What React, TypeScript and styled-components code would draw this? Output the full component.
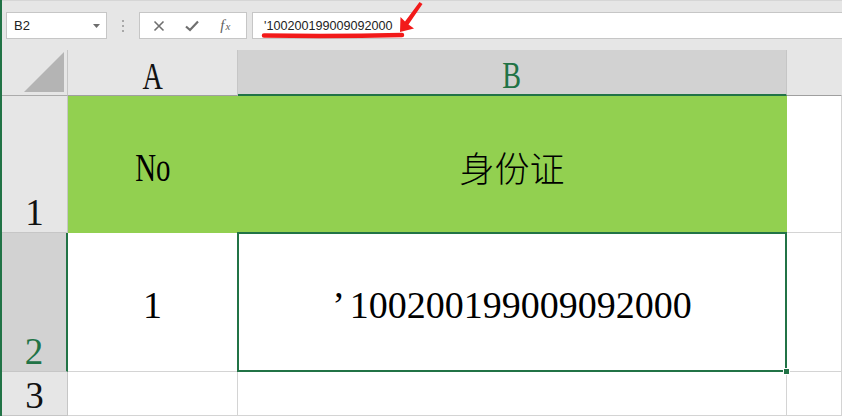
import React from "react";
import styled, { createGlobalStyle } from "styled-components";

const green = "#217346";
const fill = "#92d050";
const serif = `"Liberation Serif", "Noto Sans CJK SC", serif`;

const GlobalStyle = createGlobalStyle`
  html, body {
    margin: 0;
    padding: 0;
    background: #ffffff;
    overflow: hidden;
  }
`;

const Frame = styled.div`
  position: relative;
  height: 416px;
  display: flex;
  flex-flow: column;
  border-left: 2px solid ${green};
  overflow: hidden;
`;

const FormulaBar = styled.div`
  height: 50px;
  box-sizing: border-box;
  flex-shrink: 0;
  display: flex;
  align-items: flex-start;
  padding: 11px 0 0 4px;
  background: #e6e6e6;
  border-top: 1px solid #d6d6d6;
  font-family: "Liberation Sans", Arial, sans-serif;
`;

const Box = styled.div`
  height: 27px;
  box-sizing: border-box;
  background: #ffffff;
  border: 1px solid #c6c6c6;
  display: flex;
  align-items: center;
`;

const NameBox = styled(Box)`
  width: 101px;
  padding: 0 6px 0 7px;
  justify-content: space-between;
  font-size: 13px;
  color: #222222;
`;

const Grip = styled.div`
  width: 32px;
  height: 27px;
  display: flex;
  flex-flow: column;
  align-items: center;
  justify-content: center;
  gap: 3px;

  > span {
    width: 2px;
    height: 2px;
    background: #a8a8a8;
  }
`;

const ButtonGroup = styled(Box)`
  width: 108px;
  justify-content: space-around;
  padding: 0 4px 0 2px;
  color: #6f6f6f;
`;

const IconButton = styled.div`
  width: 24px;
  display: flex;
  justify-content: center;
  align-items: center;
`;

const FxLabel = styled.span`
  font-family: ${serif};
  font-style: italic;
  font-size: 15px;
  color: #5f5f5f;

  > small {
    font-size: 11px;
    margin-left: 1px;
  }
`;

const FormulaInput = styled(Box)`
  flex: 1;
  margin-left: 5px;
  padding-left: 11px;
  border-right: none;
  font-size: 12.6px;
  color: #222222;
`;

const Annotation = styled.svg`
  position: absolute;
  left: -2px;
  top: 0;
  pointer-events: none;
`;

const Sheet = styled.div`
  flex: 1;
  display: grid;
  grid-template-columns: 66px 170px 549px 1fr;
  grid-template-rows: 46px 137px 139px 1fr;
  font-family: ${serif};
  color: #000000;
`;

const Corner = styled.div`
  background: #e6e6e6;
  border-right: 1px solid #c6c6c6;
  border-bottom: 1px solid #ababab;
  display: flex;
  align-items: flex-end;
  justify-content: flex-end;
  padding: 0 3px 3px 0;

  &::after {
    content: "";
    width: 40px;
    height: 40px;
    background: #b4b4b4;
    clip-path: polygon(100% 0, 100% 100%, 0 100%);
  }
`;

const ColHeader = styled.div<{ $selected?: boolean; $blank?: boolean }>`
  box-sizing: border-box;
  background: ${(p) => (p.$selected ? "#d2d2d2" : "#e6e6e6")};
  border-right: 1px solid ${(p) => (p.$blank ? "transparent" : "#c6c6c6")};
  border-bottom: ${(p) => (p.$selected ? `2px solid ${green}` : "1px solid #9f9f9f")};
  color: ${(p) => (p.$selected ? green : "#111111")};
  display: flex;
  align-items: center;
  justify-content: center;
  padding-top: 6px;
  font-size: 38px;
  line-height: 1;
`;

const RowHeader = styled.div<{ $selected?: boolean }>`
  box-sizing: border-box;
  background: ${(p) => (p.$selected ? "#d2d2d2" : "#e6e6e6")};
  border-right: ${(p) => (p.$selected ? `2px solid ${green}` : "1px solid #c6c6c6")};
  border-bottom: 1px solid #c6c6c6;
  color: ${(p) => (p.$selected ? green : "#111111")};
  display: flex;
  align-items: flex-end;
  justify-content: center;
  padding-bottom: 1px;
  font-size: 37px;
  line-height: 1;
`;

const Narrow = styled.span`
  display: inline-block;
  transform: scaleX(0.74);
`;

const Cell = styled.div<{ $fill?: string; $selected?: boolean }>`
  position: relative;
  box-sizing: border-box;
  background: ${(p) => p.$fill ?? "#ffffff"};
  border-right: 1px solid ${(p) => p.$fill ?? "#d4d4d4"};
  border-bottom: 1px solid ${(p) => p.$fill ?? "#d4d4d4"};
  display: flex;
  align-items: center;
  justify-content: center;
  padding-top: 5px;
  font-size: 38px;
  line-height: 1;
  white-space: nowrap;

  ${(p) =>
    p.$selected &&
    `
    &::after {
      content: "";
      position: absolute;
      inset: -1px -1px -1px -1px;
      border: 2px solid ${green};
      pointer-events: none;
    }
    &::before {
      content: "";
      position: absolute;
      right: -4px;
      bottom: -4px;
      width: 5px;
      height: 5px;
      background: ${green};
      border: 1px solid #ffffff;
      z-index: 1;
    }
  `}
`;

const TitleText = styled.span`
  padding-top: 2px;
  font-size: 39px;
`;

const CjkText = styled.span`
  font-family: "Noto Sans CJK SC", sans-serif;
  font-size: 35px;
  font-weight: 300;
`;

const Quote = styled.span`
  margin-right: 5px;
`;

export default function App() {
  return (
    <>
      <GlobalStyle />
      <Frame>
        <FormulaBar>
          <NameBox>
            <span>B2</span>
            <svg width="7" height="4" viewBox="0 0 7 4">
              <path d="M0 0 L7 0 L3.5 4 Z" fill="#6d6d6d" />
            </svg>
          </NameBox>
          <Grip>
            <span />
            <span />
            <span />
          </Grip>
          <ButtonGroup>
            <IconButton>
              <svg width="12" height="12" viewBox="0 0 12 12">
                <path d="M1.5 1.5 L10.5 10.5 M10.5 1.5 L1.5 10.5" stroke="currentColor" strokeWidth="1.6" />
              </svg>
            </IconButton>
            <IconButton>
              <svg width="14" height="12" viewBox="0 0 14 12">
                <path d="M1 6.5 L5 10 L13 1.5" stroke="currentColor" strokeWidth="2.2" fill="none" />
              </svg>
            </IconButton>
            <IconButton>
              <FxLabel>
                f<small>x</small>
              </FxLabel>
            </IconButton>
          </ButtonGroup>
          <FormulaInput>'100200199009092000</FormulaInput>
        </FormulaBar>

        <Sheet>
          <Corner />
          <ColHeader>
            <Narrow>A</Narrow>
          </ColHeader>
          <ColHeader $selected>
            <Narrow>B</Narrow>
          </ColHeader>
          <ColHeader $blank />

          <RowHeader>1</RowHeader>
          <Cell $fill={fill}>
            <TitleText>
              <Narrow>No</Narrow>
            </TitleText>
          </Cell>
          <Cell $fill={fill}>
            <CjkText>身份证</CjkText>
          </Cell>
          <Cell />

          <RowHeader $selected>2</RowHeader>
          <Cell>1</Cell>
          <Cell $selected>
            <Quote>’</Quote>100200199009092000
          </Cell>
          <Cell />

          <RowHeader>3</RowHeader>
          <Cell />
          <Cell />
          <Cell />
        </Sheet>

        <Annotation width="842" height="50" viewBox="0 0 842 50">
          <path d="M264 35.5 Q335 36.5 402 35" stroke="#f21a1a" strokeWidth="4.5" strokeLinecap="round" fill="none" />
          <path d="M400 32 L400.5 17 L405 21.5 L419.5 2 L422.5 4 L408.5 24.5 L414 28.5 Z" fill="#f21a1a" />
        </Annotation>
      </Frame>
    </>
  );
}
